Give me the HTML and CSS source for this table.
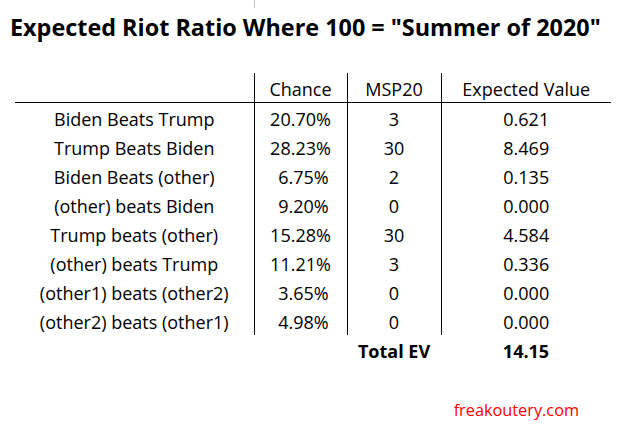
FILE: index.html
```html
<!DOCTYPE html>
<html lang="en">
<head>
<meta charset="utf-8">
<title>Expected Riot Ratio</title>
<link rel="stylesheet" href="styles.css">
</head>
<body>
<div class="page">
  <div class="stub"></div>
  <h1 class="title">Expected Riot Ratio Where 100 = "Summer of 2020"</h1>
  <table class="sheet">
    <colgroup>
      <col class="c-label"><col class="c-chance"><col class="c-msp"><col class="c-ev">
    </colgroup>
    <thead>
      <tr class="head">
        <th></th><th class="v">Chance</th><th class="v">MSP20</th><th class="v">Expected Value</th>
      </tr>
    </thead>
    <tbody>
      <tr><td>Biden Beats Trump</td><td class="v">20.70%</td><td class="v">3</td><td class="v">0.621</td></tr>
      <tr><td>Trump Beats Biden</td><td class="v">28.23%</td><td class="v">30</td><td class="v">8.469</td></tr>
      <tr><td>Biden Beats (other)</td><td class="v pct">6.75%</td><td class="v">2</td><td class="v">0.135</td></tr>
      <tr><td>(other) beats Biden</td><td class="v pct">9.20%</td><td class="v">0</td><td class="v">0.000</td></tr>
      <tr><td>Trump beats (other)</td><td class="v">15.28%</td><td class="v">30</td><td class="v">4.584</td></tr>
      <tr><td>(other) beats Trump</td><td class="v">11.21%</td><td class="v">3</td><td class="v">0.336</td></tr>
      <tr><td>(other1) beats (other2)</td><td class="v pct">3.65%</td><td class="v">0</td><td class="v">0.000</td></tr>
      <tr><td>(other2) beats (other1)</td><td class="v pct">4.98%</td><td class="v">0</td><td class="v">0.000</td></tr>
    </tbody>
    <tfoot>
      <tr class="total"><td></td><td></td><td>Total EV</td><td>14.15</td></tr>
    </tfoot>
  </table>
  <div class="credit">freakoutery.com</div>
</div>
</body>
</html>
```
FILE: styles.css
```css
html, body {
  margin: 0;
  padding: 0;
  background: #ffffff;
}

.page {
  width: 618px;
  height: 432px;
  font-family: "Open Sans", Lato, sans-serif;
  color: #000000;
}

.stub {
  width: 1px;
  height: 8px;
  margin-left: 254px;
  background: #c8c8c8;
}

.title {
  margin: 5px 0 0 10px;
  font-size: 23.4px;
  line-height: 28px;
  font-weight: 700;
}

.sheet {
  margin: 32px 0 0 15px;
  border-collapse: collapse;
  table-layout: fixed;
  font-size: 18px;
}

.c-label { width: 239px; }
.c-chance { width: 93px; }
.c-msp { width: 94px; }
.c-ev { width: 170px; }

.sheet th,
.sheet td {
  height: 29px;
  padding: 3px 0 0 0;
  box-sizing: border-box;
  line-height: 26px;
  text-align: center;
  font-weight: 400;
  white-space: nowrap;
}

.sheet .v {
  border-left: 1px solid #000000;
}

.head th {
  border-bottom: 1px solid #000000;
}

.sheet .pct {
  text-indent: 6px;
}

.total td {
  font-weight: 700;
}

.credit {
  margin: 35px 39px 0 0;
  text-align: right;
  color: #ff0000;
  font-size: 16.3px;
  line-height: 22px;
}
```
